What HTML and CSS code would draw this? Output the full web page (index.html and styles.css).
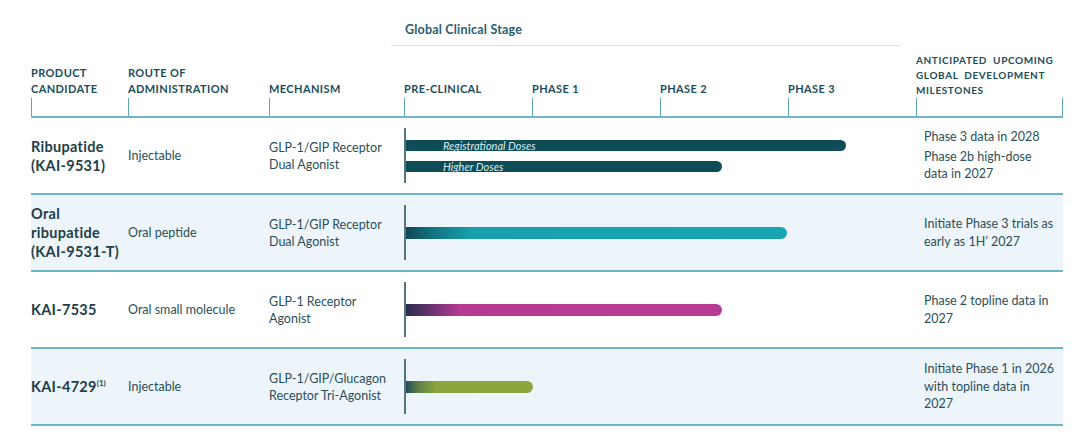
FILE: index.html
```html
<!DOCTYPE html>
<html lang="en">
<head>
<meta charset="utf-8">
<title>Pipeline</title>
<link rel="stylesheet" href="styles.css">
</head>
<body>
<div class="chart">
  <div class="stage-head"><span>Global Clinical Stage</span></div>

  <div class="head">
    <div class="hcell"><div class="hlabel">PRODUCT<br>CANDIDATE</div><div class="tick"></div></div>
    <div class="hcell"><div class="hlabel">ROUTE OF<br>ADMINISTRATION</div><div class="tick"></div></div>
    <div class="hcell"><div class="hlabel">MECHANISM</div><div class="tick"></div></div>
    <div class="hcell"><div class="hlabel">PRE-CLINICAL</div><div class="tick"></div></div>
    <div class="hcell"><div class="hlabel">PHASE 1</div><div class="tick"></div></div>
    <div class="hcell"><div class="hlabel">PHASE 2</div><div class="tick"></div></div>
    <div class="hcell"><div class="hlabel">PHASE 3</div><div class="tick"></div></div>
    <div class="hcell hcell-last"><div class="hlabel">ANTICIPATED UPCOMING<br>GLOBAL DEVELOPMENT<br>MILESTONES</div><div class="tick tick-both"></div></div>
  </div>

  <div class="row">
    <div class="name">Ribupatide<br>(KAI-9531)</div>
    <div class="route">Injectable</div>
    <div class="mech">GLP-1/GIP Receptor<br>Dual Agonist</div>
    <div class="stage">
      <div class="track">
        <div class="bar bar-dark" style="width:440px">Registrational Doses</div>
        <div class="bar bar-dark" style="width:316px">Higher Doses</div>
      </div>
    </div>
    <div class="mile mile-split">
      <p>Phase 3 data in 2028</p>
      <p>Phase 2b high-dose<br>data in 2027</p>
    </div>
  </div>

  <div class="row row-alt">
    <div class="name">Oral<br>ribupatide<br>(KAI-9531-T)</div>
    <div class="route">Oral peptide</div>
    <div class="mech">GLP-1/GIP Receptor<br>Dual Agonist</div>
    <div class="stage">
      <div class="track">
        <div class="bar bar-teal" style="width:381px"></div>
      </div>
    </div>
    <div class="mile">Initiate Phase 3 trials as<br>early as 1H’ 2027</div>
  </div>

  <div class="row">
    <div class="name">KAI-7535</div>
    <div class="route">Oral small molecule</div>
    <div class="mech">GLP-1 Receptor<br>Agonist</div>
    <div class="stage">
      <div class="track">
        <div class="bar bar-pink" style="width:316px"></div>
      </div>
    </div>
    <div class="mile">Phase 2 topline data in<br>2027</div>
  </div>

  <div class="row row-alt">
    <div class="name">KAI-4729<sup>(1)</sup></div>
    <div class="route">Injectable</div>
    <div class="mech">GLP-1/GIP/Glucagon<br>Receptor Tri-Agonist</div>
    <div class="stage">
      <div class="track">
        <div class="bar bar-green" style="width:127px"></div>
      </div>
    </div>
    <div class="mile">Initiate Phase 1 in 2026<br>with topline data in<br>2027</div>
  </div>
</div>
</body>
</html>
```

FILE: styles.css
```css
html, body {
  margin: 0;
  padding: 0;
  background: #ffffff;
}

body {
  font-family: Lato, "Open Sans", sans-serif;
  color: #2a4f5a;
}

.chart {
  margin-left: 31px;
  width: 1032px;
}

.stage-head {
  margin-left: 360px;
  width: 510px;
  height: 46px;
  box-sizing: border-box;
  border-bottom: 1px solid #dde4e7;
  padding: 22px 0 0 14px;
  font-size: 12.5px;
  font-weight: 700;
  line-height: 16px;
  letter-spacing: 0.2px;
  color: #27606f;
}

.head {
  display: grid;
  grid-template-columns: 97px 141px 135px 128px 128px 128px 128px 147px;
  align-items: end;
  height: 72px;
  box-sizing: border-box;
  border-bottom: 2px solid #6db6c5;
}

.hcell {
  display: flex;
  flex-direction: column;
}

.hlabel {
  font-size: 11px;
  font-weight: 700;
  line-height: 16px;
  letter-spacing: 0.4px;
  color: #1c4d5b;
  padding-bottom: 1px;
}

.hcell-last .hlabel {
  font-size: 10px;
  line-height: 15px;
  word-spacing: 3px;
  letter-spacing: 0.6px;
  padding-bottom: 0;
}

.tick {
  height: 18px;
  border-left: 1px solid #5fa7b6;
}

.tick-both {
  border-right: 1px solid #5fa7b6;
}

.row {
  display: grid;
  grid-template-columns: 97px 141px 135px 512px 147px;
  align-items: center;
  height: 77px;
  box-sizing: border-box;
  border-bottom: 2px solid #6db6c5;
}

.row-alt {
  background: #edf5fa;
}

.name {
  font-size: 14.5px;
  font-weight: 700;
  line-height: 19px;
  letter-spacing: 0.3px;
  color: #1e3e48;
}

.name sup {
  font-size: 8px;
  line-height: 0;
  vertical-align: 6px;
  letter-spacing: 0;
}

.route,
.mech {
  font-size: 12.5px;
  line-height: 17px;
}

.track {
  height: 55px;
  border-left: 2px solid #56767c;
  display: flex;
  flex-direction: column;
  justify-content: center;
  gap: 10px;
}

.bar {
  height: 11px;
  border-radius: 0 6px 6px 0;
  box-sizing: border-box;
  padding-left: 37px;
  font-size: 11px;
  font-style: italic;
  line-height: 11px;
  color: #d9ecef;
  white-space: nowrap;
}

.bar-dark {
  background: #0e4d58;
}

.bar-teal {
  height: 12px;
  background: linear-gradient(90deg, #0f4753 0, #12707e 25px, #18a0ae 65px, #19a4b1 100%);
}

.bar-pink {
  height: 12px;
  background: linear-gradient(90deg, #2a2e4d 0, #6b3271 25px, #b73a92 55px, #b93c94 100%);
}

.bar-green {
  height: 12px;
  background: linear-gradient(90deg, #1f4b56 0, #5e7f47 12px, #8aa53b 30px, #8ca73e 100%);
}

.mile {
  padding-left: 8px;
  font-size: 12.5px;
  line-height: 17.5px;
}

.mile p {
  margin: 0;
}

.mile-split p + p {
  margin-top: 2px;
}
```
